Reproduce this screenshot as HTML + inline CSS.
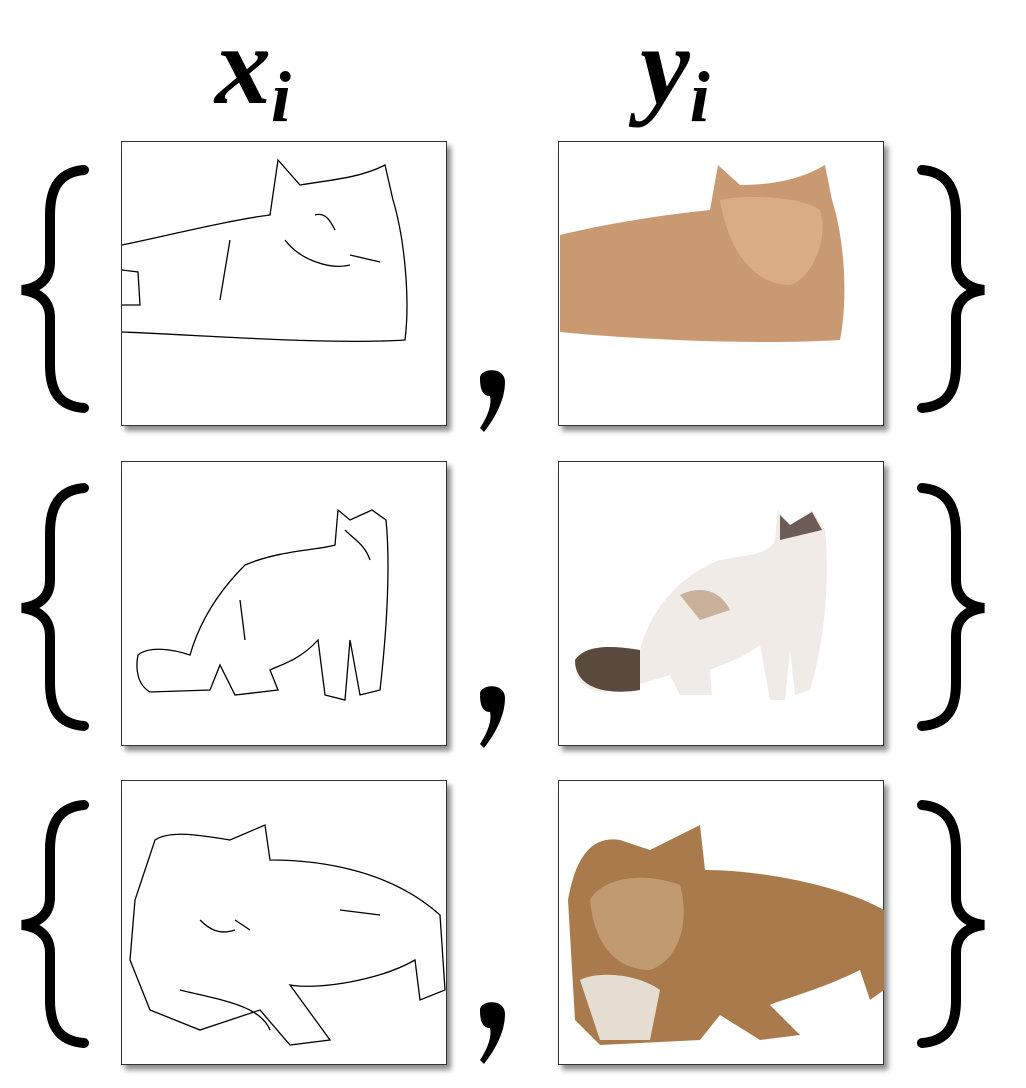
<!DOCTYPE html>
<html><head><meta charset="utf-8"><style>
html,body{margin:0;padding:0;background:#fff;width:1026px;height:1088px;overflow:hidden;position:relative}
.box{position:absolute;width:324px;height:283px;border:1px solid #333;background:#fff;box-shadow:4px 5px 5px rgba(0,0,0,.45)}
.t{position:absolute;font-family:"Liberation Serif","DejaVu Serif",serif;font-style:italic;font-weight:bold;font-size:112px;line-height:1;color:#000}
.t sub{font-size:72px;vertical-align:-18px}
svg{position:absolute;left:0;top:0}
</style></head><body>
<div class="t" style="left:215px;top:10px">x<sub>i</sub></div>
<div class="t" style="left:640px;top:10px">y<sub>i</sub></div>

<div class="box" style="left:121px;top:141px"></div>
<div class="box" style="left:558px;top:141px"></div>
<div class="box" style="left:121px;top:461px"></div>
<div class="box" style="left:558px;top:461px"></div>
<div class="box" style="left:121px;top:780px"></div>
<div class="box" style="left:558px;top:780px"></div>

<svg width="1026" height="1088" viewBox="0 0 1026 1088">
<g fill="none" stroke="#000" stroke-width="10" stroke-linecap="round">
 <path id="lb" d="M84 170 C58 172 50 190 50 215 L50 262 C50 280 38 288 22 290 C38 292 50 300 50 318 L50 365 C50 390 58 406 84 408"/>
 <use href="#lb" y="318"/><use href="#lb" y="635"/>
 <path id="rb" d="M922 170 C948 172 956 190 956 215 L956 262 C956 280 968 288 984 290 C968 292 956 300 956 318 L956 365 C956 390 948 406 922 408"/>
 <use href="#rb" y="318"/><use href="#rb" y="635"/>
</g>
<g fill="#000">
 <path id="cm" d="M480 378 C480 368 505 366 505 382 C505 400 495 418 484 432 L480 428 C488 416 492 404 490 396 C482 396 480 388 480 378Z"/>
 <use href="#cm" y="316"/><use href="#cm" y="632"/>
</g>
<g fill="none" stroke="#000" stroke-width="1.3">
 <path d="M122 245 C170 235 230 220 270 215 L278 160 L300 185 C330 180 360 178 385 165 L393 200 C405 240 410 300 405 340 C330 345 200 335 122 332"/>
 <path d="M122 270 L138 272 L140 305 L122 305"/><path d="M230 240 L220 300"/><path d="M285 240 C300 260 330 270 350 265"/><path d="M315 215 C325 212 330 220 335 230"/><path d="M350 255 L380 262"/>
 <path d="M138 655 C150 645 175 650 190 655 C200 620 220 590 245 565 C280 550 320 550 335 545 L338 510 L350 520 L372 510 L386 520 C390 560 388 620 380 690 L360 695 L350 640 L345 700 L325 695 L318 640 C300 660 280 665 270 670 L278 690 L235 695 L220 665 L210 690 L150 692 C138 685 135 670 138 655Z"/>
 <path d="M345 530 C355 540 365 545 370 560"/><path d="M240 600 L245 640"/>
 <path d="M155 840 C170 830 200 835 230 840 L265 825 L270 860 C320 860 390 870 440 915 L445 990 L420 1000 L415 960 C380 980 320 990 290 985 L330 1040 L290 1045 L260 1010 L200 1030 L150 1010 L130 960 L135 900 Z"/>
 <path d="M200 920 C210 930 220 935 235 930"/><path d="M235 920 L250 930"/><path d="M340 910 L380 915"/><path d="M180 990 C220 1000 260 1005 270 1030"/>
</g>
<path d="M560 235 C600 225 660 215 710 210 L718 165 L740 185 C770 185 800 180 825 165 L832 200 C845 240 848 300 840 340 C760 345 640 340 560 332 Z" fill="#c99a72"/>
<path d="M720 200 C740 195 800 195 820 210 C830 240 810 280 790 285 C760 285 730 260 720 200Z" fill="#d8ad85"/>
<path d="M575 660 C585 645 610 645 640 650 C650 610 680 575 720 560 C745 555 770 555 775 540 L778 510 L790 525 L812 510 L825 530 C830 580 825 640 810 690 L795 695 L790 650 L785 700 L770 700 L760 645 C740 660 720 665 710 670 L712 695 L680 695 L670 675 L620 690 C595 695 575 690 575 660Z" fill="#f0ebe6"/>
<path d="M575 660 C585 645 610 645 640 650 L640 690 C610 695 575 690 575 660Z" fill="#5a4a3e"/>
<path d="M780 515 L790 525 L812 512 L822 530 L780 540Z" fill="#6b5c55"/>
<path d="M680 595 C700 585 720 590 730 610 L700 620Z" fill="#c9b09a"/>
<path d="M568 900 C575 860 590 835 620 840 L650 850 L700 825 L705 870 C760 870 840 885 884 910 L884 990 L870 1000 L860 970 C820 990 780 1000 770 1005 L800 1035 L760 1040 L720 1015 L700 1040 L600 1045 L575 1020 Z" fill="#a87a4c"/>
<path d="M590 900 C600 880 640 870 680 885 C690 920 680 960 650 970 C620 970 595 950 590 900Z" fill="#c19a70"/>
<path d="M580 980 C600 970 640 975 660 990 L650 1040 L600 1040 Z" fill="#e6ddd2"/>
</svg>
</body></html>
